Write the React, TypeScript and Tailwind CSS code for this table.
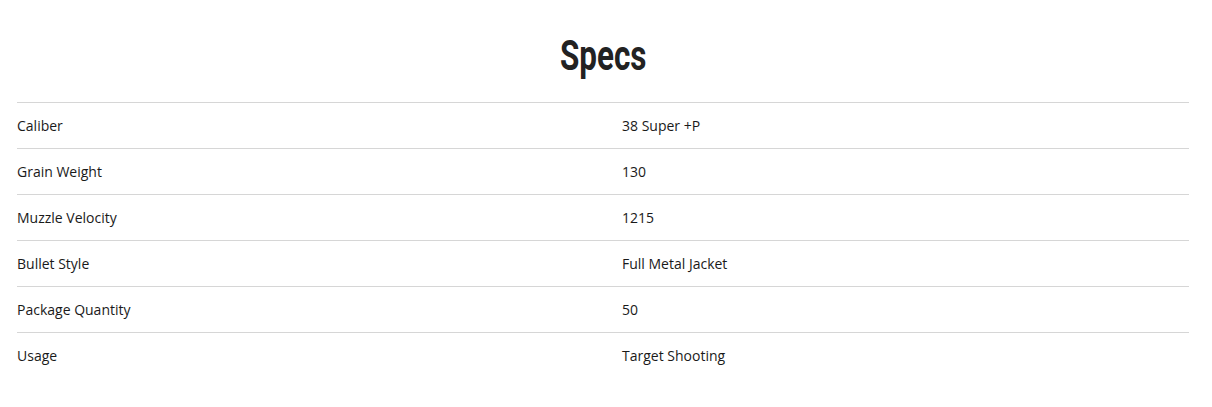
const SPECS = [
  { label: "Caliber", value: "38 Super +P" },
  { label: "Grain Weight", value: "130" },
  { label: "Muzzle Velocity", value: "1215" },
  { label: "Bullet Style", value: "Full Metal Jacket" },
  { label: "Package Quantity", value: "50" },
  { label: "Usage", value: "Target Shooting" },
];

export default function App() {
  return (
    <div className="min-h-[407px] bg-white px-[17px] font-['Open_Sans',sans-serif] text-[#1a1a1a]">
      <div className="w-[1172px]">
        <h2 className="pt-[30px] pb-[22px] text-center font-['Roboto',sans-serif] text-[43px] leading-[50px] font-bold text-[#222]">
          <span className="inline-block scale-x-[0.73]">Specs</span>
        </h2>
        {SPECS.map((row) => (
          <div key={row.label} className="flex h-[46px] items-center border-t border-[#d6d6d6] text-[14px]">
            <div className="w-[605px]">{row.label}</div>
            <div>{row.value}</div>
          </div>
        ))}
      </div>
    </div>
  );
}
